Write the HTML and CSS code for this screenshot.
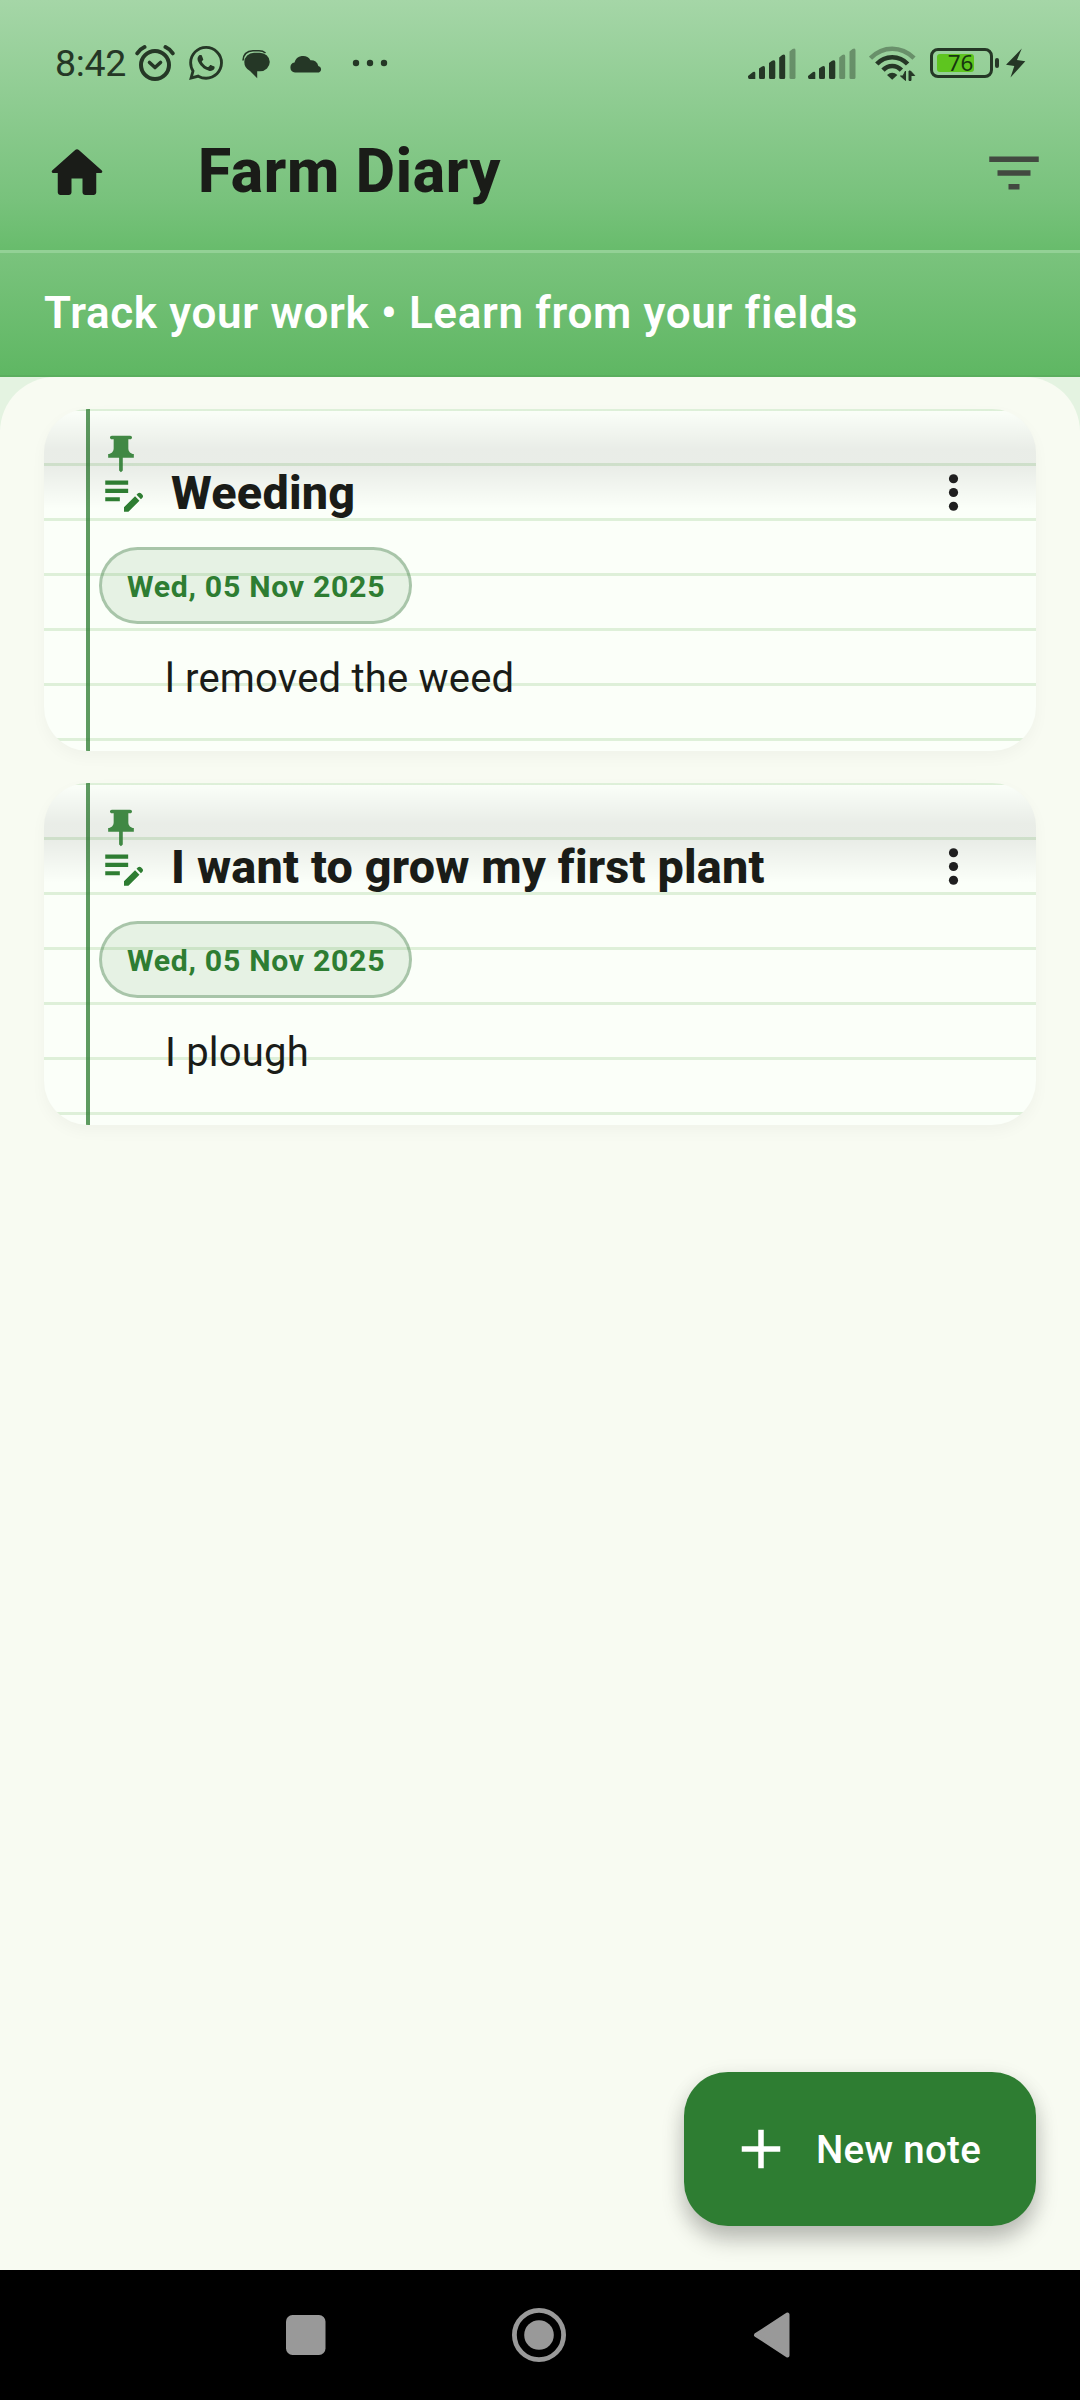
FILE: index.html
```html
<!DOCTYPE html>
<html lang="en">
<head>
<meta charset="utf-8">
<title>Farm Diary</title>
<link rel="stylesheet" href="styles.css">
</head>
<body>
<svg class="defs" width="0" height="0" aria-hidden="true">
  <symbol id="pin" viewBox="0 0 24 24"><path d="M16 9V4h1c.55 0 1-.45 1-1s-.45-1-1-1H7c-.55 0-1 .45-1 1s.45 1 1 1h1v5c0 1.66-1.34 3-3 3v2h5.97v7l1 1 1-1v-7H19v-2c-1.66 0-3-1.34-3-3z"/></symbol>
  <symbol id="note" viewBox="0 0 24 24"><path d="M3 10h11v2H3v-2zm0-2h11V6H3v2zm0 8h7v-2H3v2zm15.01-3.13.71-.71c.39-.39 1.02-.39 1.41 0l.71.71c.39.39.39 1.02 0 1.41l-.71.71-2.12-2.12zm-.71.71-5.3 5.3V21h2.12l5.3-5.3-2.12-2.12z"/></symbol>
  <symbol id="more" viewBox="0 0 24 24"><circle cx="12" cy="6" r="2"/><circle cx="12" cy="12" r="2"/><circle cx="12" cy="18" r="2"/></symbol>
</svg>
<div class="screen">
  <header class="top">
    <div class="status">
      <span class="time">8:42</span>
      <svg class="alarm" width="40" height="38" viewBox="0 0 40 38"><circle cx="20" cy="21" r="14" fill="none" stroke="currentColor" stroke-width="4"/><path d="M14.500 18.500l5.500 5 5.500-5" fill="none" stroke="currentColor" stroke-width="3.600" stroke-linecap="round" stroke-linejoin="round"/><path d="M2.300 9.300Q5 5 9.500 3M37.700 9.300Q35 5 30.500 3" fill="none" stroke="currentColor" stroke-width="4" stroke-linecap="round"/></svg>
      <svg class="whatsapp" width="34" height="34" viewBox="0 0 24 24" fill="currentColor"><path d="M17.472 14.382c-.297-.149-1.758-.867-2.030-.967-.273-.099-.471-.148-.670.150-.197.297-.767.966-.940 1.164-.173.199-.347.223-.644.075-.297-.150-1.255-.463-2.390-1.475-.883-.788-1.480-1.761-1.653-2.059-.173-.297-.018-.458.130-.606.134-.133.298-.347.446-.520.149-.174.198-.298.298-.497.099-.198.050-.371-.025-.520-.075-.149-.669-1.612-.916-2.207-.242-.579-.487-.500-.669-.510-.173-.008-.371-.010-.570-.010-.198 0-.520.074-.792.372-.272.297-1.040 1.016-1.040 2.479 0 1.462 1.065 2.875 1.213 3.074.149.198 2.096 3.200 5.077 4.487.709.306 1.262.489 1.694.625.712.227 1.360.195 1.871.118.571-.085 1.758-.719 2.006-1.413.248-.694.248-1.289.173-1.413-.074-.124-.272-.198-.570-.347m-5.421 7.403h-.004a9.870 9.870 0 01-5.031-1.378l-.361-.214-3.741.982.998-3.648-.235-.374a9.860 9.860 0 01-1.510-5.260c.001-5.450 4.436-9.884 9.888-9.884 2.640 0 5.122 1.030 6.988 2.898a9.825 9.825 0 012.893 6.994c-.003 5.450-4.437 9.884-9.885 9.884m8.413-18.297A11.815 11.815 0 0012.050 0C5.495 0 .160 5.335.157 11.892c0 2.096.547 4.142 1.588 5.945L.057 24l6.305-1.654a11.882 11.882 0 005.683 1.448h.005c6.554 0 11.890-5.335 11.893-11.893a11.821 11.821 0 00-3.480-8.413z"/></svg>
      <svg class="chat" width="29" height="29" viewBox="0 0 29 29"><path d="M12 2.700H17.500A10 9.300 0 0 1 18 21.300H15.200V28.300L8 21Q2.300 18 2.300 12A9.700 9.300 0 0 1 12 2.700Z" fill="currentColor"/><path d="M1 10.500Q1.500 1.200 11 .8H17Q21 .8 23.500 3" fill="none" stroke="currentColor" stroke-width="1.600"/></svg>
      <svg class="cloud" width="33" height="19" viewBox="0 0 33 19"><path d="M5 18.500A5 5 0 0 1 4.500 8.600A8.800 8.800 0 0 1 20.500 6.200A7 7 0 0 1 28.300 12A3.400 3.400 0 0 1 29 18.500Z" fill="currentColor"/></svg>
      <svg class="dots" width="36" height="8" viewBox="0 0 36 8" fill="currentColor"><circle cx="4" cy="4" r="3.200"/><circle cx="18" cy="4" r="3.200"/><circle cx="32" cy="4" r="3.200"/></svg>
      <span class="spacer"></span>
      <svg class="signal" width="48" height="31" viewBox="0 0 48 31" fill="currentColor"><path d="M0 28l5-4q2.300-1 2.300 1v6H1.500Q0 31 0 29zM11 20.500l3-2q3-1.500 3 1.500v9.500q0 1.500-1.500 1.500h-3Q11 31 11 29.500zM21 15l3-2.300q3.300-1.500 3.300 1.500v15.300q0 1.500-1.500 1.500h-3.300Q21 31 21 29.500zM31.200 9.500l3-2.500q3-1.500 3 1.500v21q0 1.500-1.500 1.500h-3q-1.500 0-1.500-1.500z"/><path opacity=".42" d="M41.500 3.500l3-2.500q3-1.500 3 1.500v27Q47.500 31 46 31h-3q-1.500 0-1.500-1.500z"/></svg>
      <svg class="signal second" width="48" height="31" viewBox="0 0 48 31" fill="currentColor"><path d="M0 28l5-4q2.300-1 2.300 1v6H1.500Q0 31 0 29zM11 20.500l3-2q3-1.500 3 1.500v9.500q0 1.500-1.500 1.500h-3Q11 31 11 29.500zM21 15l3-2.300q3.300-1.500 3.300 1.500v15.300q0 1.500-1.500 1.500h-3.300Q21 31 21 29.500z"/><path opacity=".42" d="M31.200 9.500l3-2.500q3-1.500 3 1.500v21q0 1.500-1.500 1.500h-3q-1.500 0-1.500-1.500zM41.500 3.500l3-2.500q3-1.500 3 1.500v27Q47.500 31 46 31h-3q-1.500 0-1.500-1.500z"/></svg>
      <svg class="wifi" width="47" height="36" viewBox="0 0 47 36"><g fill="none" stroke="currentColor" stroke-width="4.600"><path opacity=".42" d="M1.500 12.200Q11 2.800 23.200 2.800T45 12.200"/><path d="M7.800 18Q14 11.200 23.200 11.200T38.600 18"/><path d="M14 24.200Q18 20 23.200 20T32.400 24.200"/></g><path d="M18 29Q23.200 24.600 28.400 29L23.200 33.700Z" fill="currentColor"/><path d="M36.500 25v9.500L31.500 30h2.500zM40 25v9.500h2v-5h3.700L41.500 25z" fill="currentColor" stroke="currentColor" stroke-width="1"/></svg>
      <span class="battery"><span class="level"></span><span class="percent">76</span></span>
      <span class="nub"></span>
      <svg class="bolt" width="20" height="30" viewBox="0 0 20 30" fill="currentColor"><path d="M15.800.5 0 16.800l8.300 1.300L4.500 29.500 19.300 13.300l-8.300-1.200z"/></svg>
    </div>
    <div class="appbar">
      <svg width="66" height="66" viewBox="0 0 24 24" fill="currentColor"><path d="M10 19v-5h4v5c0 .55.45 1 1 1h3c.55 0 1-.45 1-1v-7h1.700c.46 0 .68-.57.33-.87L12.670 3.600c-.38-.34-.96-.34-1.340 0l-8.360 7.530c-.34.300-.13.870.330.870H5v7c0 .55.45 1 1 1h3c.55 0 1-.45 1-1z"/></svg>
      <h1 class="title">Farm Diary</h1>
      <svg class="filter" width="66" height="66" viewBox="0 0 24 24" fill="currentColor"><path d="M10 18h4v-2h-4v2zM3 6v2h18V6H3zm3 7h12v-2H6v2z"/></svg>
    </div>
  </header>
  <p class="tagline">Track your work • Learn from your fields</p>
  <div class="backdrop">
    <main class="sheet">
      <article class="card">
        <svg class="pin" width="44" height="44"><use href="#pin"/></svg>
        <div class="head">
          <svg class="note" width="50" height="50"><use href="#note"/></svg>
          <h2 class="name">Weeding</h2>
          <svg class="more" width="55" height="55"><use href="#more"/></svg>
        </div>
        <span class="date">Wed, 05 Nov 2025</span>
        <p class="text">l removed the weed</p>
      </article>
      <article class="card">
        <svg class="pin" width="44" height="44"><use href="#pin"/></svg>
        <div class="head">
          <svg class="note" width="50" height="50"><use href="#note"/></svg>
          <h2 class="name">I want to grow my first plant</h2>
          <svg class="more" width="55" height="55"><use href="#more"/></svg>
        </div>
        <span class="date">Wed, 05 Nov 2025</span>
        <p class="text">I plough</p>
      </article>
      <button class="fab">
        <svg width="66" height="66" viewBox="0 0 24 24" fill="currentColor"><path d="M19 13h-6v6h-2v-6H5v-2h6V5h2v6h6v2z"/></svg>
        <span>New note</span>
      </button>
    </main>
  </div>
  <nav class="nav">
    <svg width="40" height="40" viewBox="0 0 40 40" fill="currentColor"><rect width="39.500" height="40" rx="6.500"/></svg>
    <svg width="54" height="54" viewBox="0 0 54 54"><circle cx="27" cy="27" r="24.600" fill="none" stroke="currentColor" stroke-width="4.800"/><circle cx="27" cy="27" r="14.800" fill="currentColor"/></svg>
    <svg width="38" height="46" viewBox="0 0 38 46"><path d="M3 23 34.500 2.500v41z" fill="currentColor" stroke="currentColor" stroke-width="4" stroke-linejoin="round"/></svg>
  </nav>
</div>
</body>
</html>
```
FILE: styles.css
```css
* { box-sizing: border-box; }
body { margin: 0; font-family: Roboto, "Liberation Sans", sans-serif; color: #1a1c18; }
h1, h2, p { margin: 0; }
svg { display: block; flex: none; }
.defs { position: absolute; }
.screen { width: 1080px; height: 2400px; display: flex; flex-direction: column; overflow: hidden; }

.top { height: 250px; background: linear-gradient(#a5d6a7, #78c27c 80%, #68bc6c); }
.status { height: 96px; padding: 30px 54px 0 55px; display: flex; align-items: center; color: #253726; }
.time { font-size: 37.500px; line-height: 40px; width: 80px; font-weight: 450; letter-spacing: -.3px; white-space: nowrap; }
.whatsapp { margin-left: 14px; }
.chat { margin: 2px 0 0 19px; }
.cloud { margin-left: 19px; }
.dots { margin-left: 29px; }
.spacer { flex: 1; }
.second { margin-left: 12px; }
.wifi { margin: 2px 0 0 13px; }
.battery { margin-left: 14px; width: 63px; height: 30px; border: 3px solid #253726; border-radius: 8px; display: flex; align-items: center; justify-content: center; position: relative; color: #17370f; }
.level { position: absolute; left: 4px; top: 3px; width: 37px; height: 18px; border-radius: 3px; background: #5ec51f; }
.percent { position: relative; left: -1px; font: 22.500px/24px "Noto Sans", sans-serif; }
.nub { width: 4px; height: 10px; margin-left: 2px; border-radius: 2px; background: #253726; }
.bolt { margin-left: 7px; }
.appbar { height: 154px; padding: 0 33px 0 44px; display: flex; align-items: center; }
.title { flex: 1; margin: -2px 0 0 88px; font-size: 60.500px; line-height: 72px; font-weight: 800; letter-spacing: .7px; }
.filter { color: #424940; }

.tagline { height: 127px; padding: 0 44px; border-top: 3px solid #93d196; border-bottom: 2px solid #5bae5e; background: linear-gradient(#7ac37d, #5fb763); color: #fff; font-size: 44px; line-height: 120px; font-weight: 600; letter-spacing: .66px; white-space: nowrap; }

.backdrop { flex: 1; background: #e4f3e1; }
.sheet { height: 1893px; padding: 32px 44px 44px; border-radius: 55px 55px 0 0; background: #f8fbf2; display: flex; flex-direction: column; gap: 32px; }

.card {
  height: 342px; padding: 23px 55px 0; border-radius: 44px; overflow: hidden; flex: none;
  display: flex; flex-direction: column; align-items: flex-start;
  box-shadow: 0 6px 16px rgba(0, 0, 0, .035);
  background:
    linear-gradient(rgba(0, 0, 0, 0), rgba(0, 0, 0, .07) 40%, rgba(0, 0, 0, .07) 58%, rgba(0, 0, 0, 0)) 0 0 / 100% 100px no-repeat,
    linear-gradient(rgba(46, 125, 50, .77), rgba(46, 125, 50, .77)) 42px 0 / 4px 100% no-repeat,
    repeating-linear-gradient(#def0d9 0 2px, transparent 2px 54px, #def0d9 54px 55px),
    #fbfff9;
}
.pin { fill: #2e7d32; opacity: .9; }
.head { width: 100%; height: 33px; display: flex; align-items: center; }
.note { fill: #2e7d32; }
.name { flex: 1; margin-left: 22px; font-size: 46.750px; line-height: 56px; font-weight: 800; letter-spacing: .2px; white-space: nowrap; }
.more { fill: #1f1f1f; }
.date { height: 77px; margin-top: 38px; padding: 0 24px 0 25px; border: 3px solid rgba(46, 110, 50, .4); border-radius: 39px; background: rgba(46, 125, 50, .1); background-clip: padding-box; color: #2e7d32; font-size: 30.250px; line-height: 73px; font-weight: 700; letter-spacing: .7px; }
.text { margin: 23px 0 0 66px; font-size: 40px; line-height: 63px; letter-spacing: .2px; }

.fab { margin-top: auto; align-self: flex-end; width: 352px; height: 154px; padding: 0 0 0 44px; border: 0; border-radius: 44px; background: #2e7d32; color: #fff; display: flex; align-items: center; gap: 22px; font: 500 38.500px/46px Roboto, sans-serif; letter-spacing: .28px; box-shadow: 0 14px 22px rgba(0, 0, 0, .23), 0 4px 22px rgba(0, 0, 0, .07); }
.fab span { padding-top: 2px; }

.nav { height: 130px; background: #000; color: #999; display: flex; align-items: center; padding-left: 286px; gap: 186px; }
.nav svg:last-child { margin-left: 1px; }
```
